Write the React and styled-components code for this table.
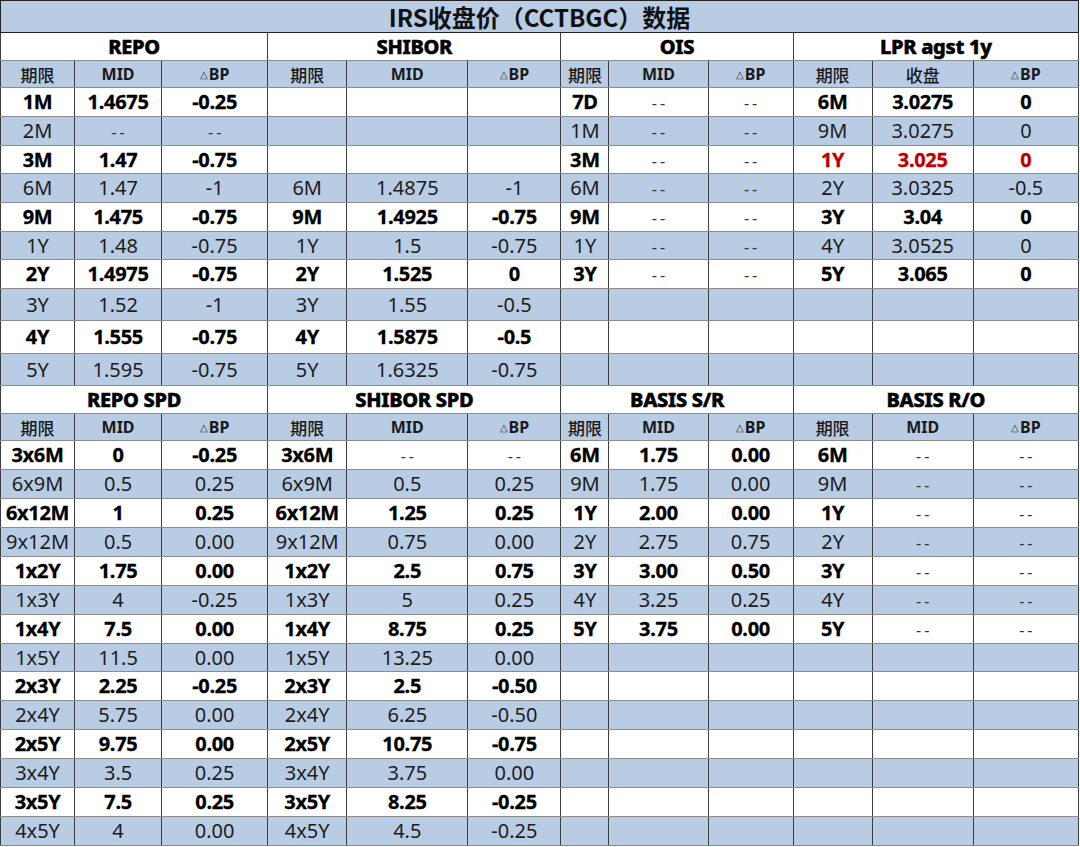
import React from "react";
import styled, { createGlobalStyle } from "styled-components";

const Global = createGlobalStyle`
  html, body { margin: 0; padding: 0; background: #ffffff; }
  body { font-family: "Noto Sans", "Noto Sans CJK SC", sans-serif; color: #000; }
`;

const BLUE = "#b8cce4";
const LINE_V = "#3c3c3c";
const LINE_H = "#8c8c8c";

const Sheet = styled.table`
  width: 1079px;
  table-layout: fixed;
  border-collapse: collapse;
  border: 1px solid #222;
`;

const Row = styled.tr`
  height: ${(p) => p.$h}px;
  background: ${(p) => (p.$blue ? BLUE : "#ffffff")};
`;

const TitleCell = styled.td`
  padding: 0;
  text-align: center;
  font-family: "Noto Sans CJK SC", "Noto Sans", sans-serif;
  font-weight: 700;
  font-size: 24px;
  line-height: 1;
  color: #111;
  border-bottom: 1px solid #222;
`;

const GroupCell = styled.td`
  padding: 0;
  text-align: center;
  font-weight: 800;
  font-size: 20px;
  letter-spacing: -0.3px;
  line-height: 1;
  -webkit-text-stroke: 0.5px #000;
  border-left: 1px solid ${LINE_V};
  border-right: 1px solid ${LINE_V};
  border-top: 1px solid ${LINE_H};
  border-bottom: 1px solid ${LINE_H};
`;

const HeadCell = styled.td`
  padding: 0;
  text-align: center;
  line-height: 1;
  font-size: ${(p) => (p.$cjk ? 17 : 16)}px;
  font-weight: ${(p) => (p.$cjk ? 500 : 700)};
  font-family: ${(p) =>
    p.$cjk ? `"Noto Sans CJK SC", sans-serif` : `"Noto Sans", sans-serif`};
  color: #1a1a1a;
  border-left: 1px solid ${LINE_V};
  border-right: 1px solid ${LINE_V};
  border-top: 1px solid ${LINE_H};
  border-bottom: 1px solid ${LINE_H};
`;

const Tri = styled.span`
  font-size: 10px;
  font-weight: 400;
  vertical-align: 2px;
  margin-right: 1px;
  color: #333;
`;

const Cell = styled.td`
  padding: 0;
  text-align: center;
  font-size: 20px;
  line-height: 1;
  white-space: nowrap;
  font-weight: ${(p) => (p.$bold ? 700 : 400)};
  color: ${(p) => (p.$red ? "#c00000" : p.$bold ? "#000" : "#1c1c1c")};
  letter-spacing: ${(p) => (p.$bold ? "-0.3px" : "0")};
  -webkit-text-stroke: ${(p) => (p.$bold ? "0.3px" : "0")};
  border-left: 1px solid ${LINE_V};
  border-right: 1px solid ${LINE_V};
  border-top: 1px solid ${LINE_H};
  border-bottom: 1px solid ${LINE_H};
`;

const Dash = styled.span`
  font-weight: 400;
  font-size: 16px;
  letter-spacing: 3px;
  margin-right: -3px;
  color: #333;
  -webkit-text-stroke: 0;
`;

const widths = [74, 87, 106, 79, 121, 93, 48, 99, 85, 79, 101, 105];

const D = "--";

const top = {
  groups: ["REPO", "SHIBOR", "OIS", "LPR agst 1y"],
  heads: [
    ["期限", "MID", "BP"],
    ["期限", "MID", "BP"],
    ["期限", "MID", "BP"],
    ["期限", "收盘", "BP"],
  ],
  rows: [
    [["1M", "1.4675", "-0.25"], null, ["7D", D, D], ["6M", "3.0275", "0"]],
    [["2M", D, D], null, ["1M", D, D], ["9M", "3.0275", "0"]],
    [["3M", "1.47", "-0.75"], null, ["3M", D, D], ["1Y", "3.025", "0", true]],
    [["6M", "1.47", "-1"], ["6M", "1.4875", "-1"], ["6M", D, D], ["2Y", "3.0325", "-0.5"]],
    [["9M", "1.475", "-0.75"], ["9M", "1.4925", "-0.75"], ["9M", D, D], ["3Y", "3.04", "0"]],
    [["1Y", "1.48", "-0.75"], ["1Y", "1.5", "-0.75"], ["1Y", D, D], ["4Y", "3.0525", "0"]],
    [["2Y", "1.4975", "-0.75"], ["2Y", "1.525", "0"], ["3Y", D, D], ["5Y", "3.065", "0"]],
    [["3Y", "1.52", "-1"], ["3Y", "1.55", "-0.5"], null, null],
    [["4Y", "1.555", "-0.75"], ["4Y", "1.5875", "-0.5"], null, null],
    [["5Y", "1.595", "-0.75"], ["5Y", "1.6325", "-0.75"], null, null],
  ],
  heights: [29, 29, 28, 29, 29, 28, 29, 32, 33, 32],
};

const bottom = {
  groups: ["REPO SPD", "SHIBOR SPD", "BASIS S/R", "BASIS R/O"],
  heads: [
    ["期限", "MID", "BP"],
    ["期限", "MID", "BP"],
    ["期限", "MID", "BP"],
    ["期限", "MID", "BP"],
  ],
  rows: [
    [["3x6M", "0", "-0.25"], ["3x6M", D, D], ["6M", "1.75", "0.00"], ["6M", D, D]],
    [["6x9M", "0.5", "0.25"], ["6x9M", "0.5", "0.25"], ["9M", "1.75", "0.00"], ["9M", D, D]],
    [["6x12M", "1", "0.25"], ["6x12M", "1.25", "0.25"], ["1Y", "2.00", "0.00"], ["1Y", D, D]],
    [["9x12M", "0.5", "0.00"], ["9x12M", "0.75", "0.00"], ["2Y", "2.75", "0.75"], ["2Y", D, D]],
    [["1x2Y", "1.75", "0.00"], ["1x2Y", "2.5", "0.75"], ["3Y", "3.00", "0.50"], ["3Y", D, D]],
    [["1x3Y", "4", "-0.25"], ["1x3Y", "5", "0.25"], ["4Y", "3.25", "0.25"], ["4Y", D, D]],
    [["1x4Y", "7.5", "0.00"], ["1x4Y", "8.75", "0.25"], ["5Y", "3.75", "0.00"], ["5Y", D, D]],
    [["1x5Y", "11.5", "0.00"], ["1x5Y", "13.25", "0.00"], null, null],
    [["2x3Y", "2.25", "-0.25"], ["2x3Y", "2.5", "-0.50"], null, null],
    [["2x4Y", "5.75", "0.00"], ["2x4Y", "6.25", "-0.50"], null, null],
    [["2x5Y", "9.75", "0.00"], ["2x5Y", "10.75", "-0.75"], null, null],
    [["3x4Y", "3.5", "0.25"], ["3x4Y", "3.75", "0.00"], null, null],
    [["3x5Y", "7.5", "0.25"], ["3x5Y", "8.25", "-0.25"], null, null],
    [["4x5Y", "4", "0.00"], ["4x5Y", "4.5", "-0.25"], null, null],
  ],
  heights: [29, 29, 29, 29, 29, 29, 29, 28, 29, 29, 29, 29, 29, 29],
};

function Section({ data }) {
  return (
    <>
      <Row $h={28}>
        {data.groups.map((g) => (
          <GroupCell key={g} colSpan={3}>
            {g}
          </GroupCell>
        ))}
      </Row>
      <Row $h={27} $blue>
        {data.heads.map((h, gi) =>
          h.map((t, i) =>
            t === "BP" ? (
              <HeadCell key={`${gi}-${i}`}>
                <Tri>△</Tri>BP
              </HeadCell>
            ) : (
              <HeadCell key={`${gi}-${i}`} $cjk={/[^\x00-\x7f]/.test(t)}>
                {t}
              </HeadCell>
            )
          )
        )}
      </Row>
      {data.rows.map((r, ri) => {
        const bold = ri % 2 === 0;
        return (
          <Row key={ri} $h={data.heights[ri]} $blue={!bold}>
            {r.map((g, gi) =>
              [0, 1, 2].map((ci) => {
                const v = g ? g[ci] : "";
                return (
                  <Cell key={`${gi}-${ci}`} $bold={bold} $red={g && g[3]}>
                    {v === D ? <Dash>{D}</Dash> : v}
                  </Cell>
                );
              })
            )}
          </Row>
        );
      })}
    </>
  );
}

export default function App() {
  return (
    <>
      <Global />
      <Sheet>
        <colgroup>
          {widths.map((w, i) => (
            <col key={i} style={{ width: w }} />
          ))}
        </colgroup>
        <tbody>
          <Row $h={32} $blue>
            <TitleCell colSpan={12}>IRS收盘价（CCTBGC）数据</TitleCell>
          </Row>
          <Section data={top} />
          <Section data={bottom} />
        </tbody>
      </Sheet>
    </>
  );
}
